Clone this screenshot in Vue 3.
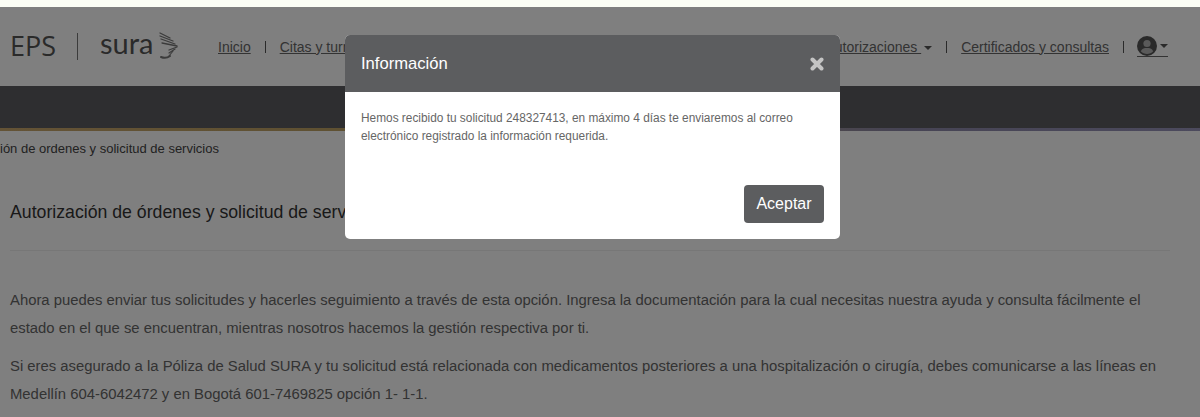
<template>
  <div class="screen">
    <div class="strip"></div>
    <div class="page">
      <header class="top">
        <div class="brand">
          <span class="eps">EPS</span>
          <span class="brand-line"></span>
          <span class="sura">sura</span>
          <svg class="wing" width="20" height="28" viewBox="0 0 20 28" fill="none" stroke="#777" stroke-linecap="round">
            <path d="M1 1 L11 6" stroke-width="1.3" />
            <path d="M1 4 L14 9" stroke-width="1.3" />
            <path d="M2 7 L16 12" stroke-width="1.3" />
            <path d="M3 11 L18 14" stroke-width="1.3" />
            <path d="M18 15 L10 18" stroke-width="1.3" />
            <path d="M16 17 L10 21" stroke-width="1.2" />
            <path d="M14 19 L10 24" stroke-width="1.2" />
            <path d="M2 25 Q7 27 11 24" stroke-width="2" />
          </svg>
        </div>
        <nav class="nav">
          <a>Inicio</a>
          <span class="sep"></span>
          <a>Citas y turnos</a>
        </nav>
        <nav class="nav right">
          <a>Autorizaciones <i class="caret"></i></a>
          <span class="sep"></span>
          <a>Certificados y consultas</a>
          <span class="sep"></span>
          <a class="user">
            <svg width="20" height="20" viewBox="0 0 20 20">
              <circle cx="10" cy="10" r="10" fill="#555" />
              <circle cx="10" cy="7.5" r="3.6" fill="#b5b5b5" />
              <path d="M3.8 15.2 C5 12.4 7.5 12 10 12 C12.5 12 15 12.4 16.2 15.2 C14.6 17 12.4 18 10 18 C7.6 18 5.4 17 3.8 15.2 Z" fill="#b5b5b5" />
            </svg>
            <i class="caret"></i>
          </a>
        </nav>
      </header>
      <div class="bar"></div>
      <div class="rule"></div>
      <div class="crumb">ión de ordenes y solicitud de servicios</div>
      <main class="content">
        <h2>Autorización de órdenes y solicitud de servicios</h2>
        <hr />
        <p>Ahora puedes enviar tus solicitudes y hacerles seguimiento a través de esta opción. Ingresa la documentación para la cual necesitas nuestra ayuda y consulta fácilmente el estado en el que se encuentran, mientras nosotros hacemos la gestión respectiva por ti.</p>
        <p>Si eres asegurado a la Póliza de Salud SURA y tu solicitud está relacionada con medicamentos posteriores a una hospitalización o cirugía, debes comunicarse a las líneas en Medellín 604-6042472 y en Bogotá 601-7469825 opción 1- 1-1.</p>
      </main>
      <div class="overlay">
        <section class="modal">
          <div class="modal-head">
            <h3>Información</h3>
            <svg class="close" width="14" height="14" viewBox="0 0 14 14" stroke="#c4c4c4" stroke-width="4" stroke-linecap="round">
              <path d="M2.5 2.5 L11.5 11.5 M11.5 2.5 L2.5 11.5" />
            </svg>
          </div>
          <div class="modal-body">
            <p>Hemos recibido tu solicitud {{ requestId }}, en máximo 4 días te enviaremos al correo electrónico registrado la información requerida.</p>
          </div>
          <div class="modal-foot">
            <button>Aceptar</button>
          </div>
        </section>
      </div>
    </div>
  </div>
</template>

<script setup>
const requestId = "248327413";
</script>

<style>
html,
body {
  margin: 0;
  overflow: hidden;
}
</style>

<style scoped>
.screen {
  height: 417px;
  overflow: hidden;
  background: #fbfdf5;
  font-family: "Liberation Sans", Arial, sans-serif;
}

.strip {
  height: 7px;
}

.page {
  position: relative;
  height: 410px;
  background: #fff;
  overflow: hidden;
}

.top {
  height: 79px;
  display: flex;
  align-items: center;
  padding: 0 32px 0 10px;
}

.brand {
  display: flex;
  align-items: center;
  width: 208px;
  flex: none;
  color: #555;
}

.eps {
  font-family: "Open Sans", sans-serif;
  font-size: 27px;
  width: 67px;
  line-height: 30px;
  margin-top: -2px;
}

.brand-line {
  width: 1px;
  height: 27px;
  background: #777;
  margin-right: 22px;
}

.sura {
  font-family: Lato, sans-serif;
  font-size: 29px;
  line-height: 30px;
  margin-top: -7px;
  width: 59px;
}

.wing {
  margin-top: -2px;
}

.nav {
  display: flex;
  align-items: center;
  font-size: 14px;
  color: #666;
}

.nav a {
  text-decoration: underline;
}

.right {
  margin-left: auto;
}

.sep {
  width: 1px;
  height: 12px;
  background: #555;
  margin: 1px 14px 0;
}

.caret {
  display: inline-block;
  width: 0;
  height: 0;
  border: 4px solid transparent;
  border-top-color: #555;
  border-bottom: 0;
  margin-left: 3px;
  vertical-align: 2px;
}

.nav .user {
  display: flex;
  align-items: center;
  border-bottom: 1px solid #666;
  text-decoration: none;
  margin-left: -1px;
}

.user .caret {
  margin-left: 3px;
}

.bar {
  height: 42px;
  background: #5c5d60;
}

.rule {
  height: 3px;
  background: linear-gradient(90deg, #c8a66c 0%, #b8a060 45%, #8d88a8 75%, #9894ba 100%);
}

.crumb {
  font-size: 13px;
  color: #444;
  padding-top: 10px;
  line-height: 15px;
  height: 25px;
}

.content {
  padding: 0 30px 0 10px;
  color: #666;
}

.content h2 {
  margin: 0;
  padding-top: 36px;
  font-size: 17.7px;
  font-weight: 400;
  color: #333;
  line-height: 21px;
}

.content hr {
  border: 0;
  border-top: 1px solid #eee;
  margin: 27px 0 36px;
}

.content p {
  margin: 0 0 11px;
  font-size: 14.85px;
  line-height: 27.5px;
}

.overlay {
  position: absolute;
  inset: 0;
  background: rgba(0, 0, 0, 0.5);
}

.modal {
  position: absolute;
  left: 345px;
  top: 28px;
  width: 495px;
  height: 204px;
  background: #fff;
  border-radius: 5px;
  overflow: hidden;
  display: flex;
  flex-direction: column;
}

.modal-head {
  height: 57px;
  flex: none;
  background: #5c5d5f;
  display: flex;
  align-items: center;
  justify-content: space-between;
  padding: 0 16px;
}

.modal-head h3 {
  margin: 0;
  font-size: 16.6px;
  font-weight: 400;
  color: #fff;
}

.modal-body {
  flex: 1;
  padding: 17px 16px 0;
}

.modal-body p {
  margin: 0;
  font-size: 11.87px;
  line-height: 18px;
  color: #666;
}

.modal-foot {
  display: flex;
  justify-content: flex-end;
  padding: 0 16px 16px;
}

.modal-foot button {
  width: 80px;
  height: 38px;
  border: 0;
  border-radius: 4px;
  background: #5c5d5f;
  color: #fff;
  font-family: inherit;
  font-size: 16px;
  padding: 0;
}
</style>
